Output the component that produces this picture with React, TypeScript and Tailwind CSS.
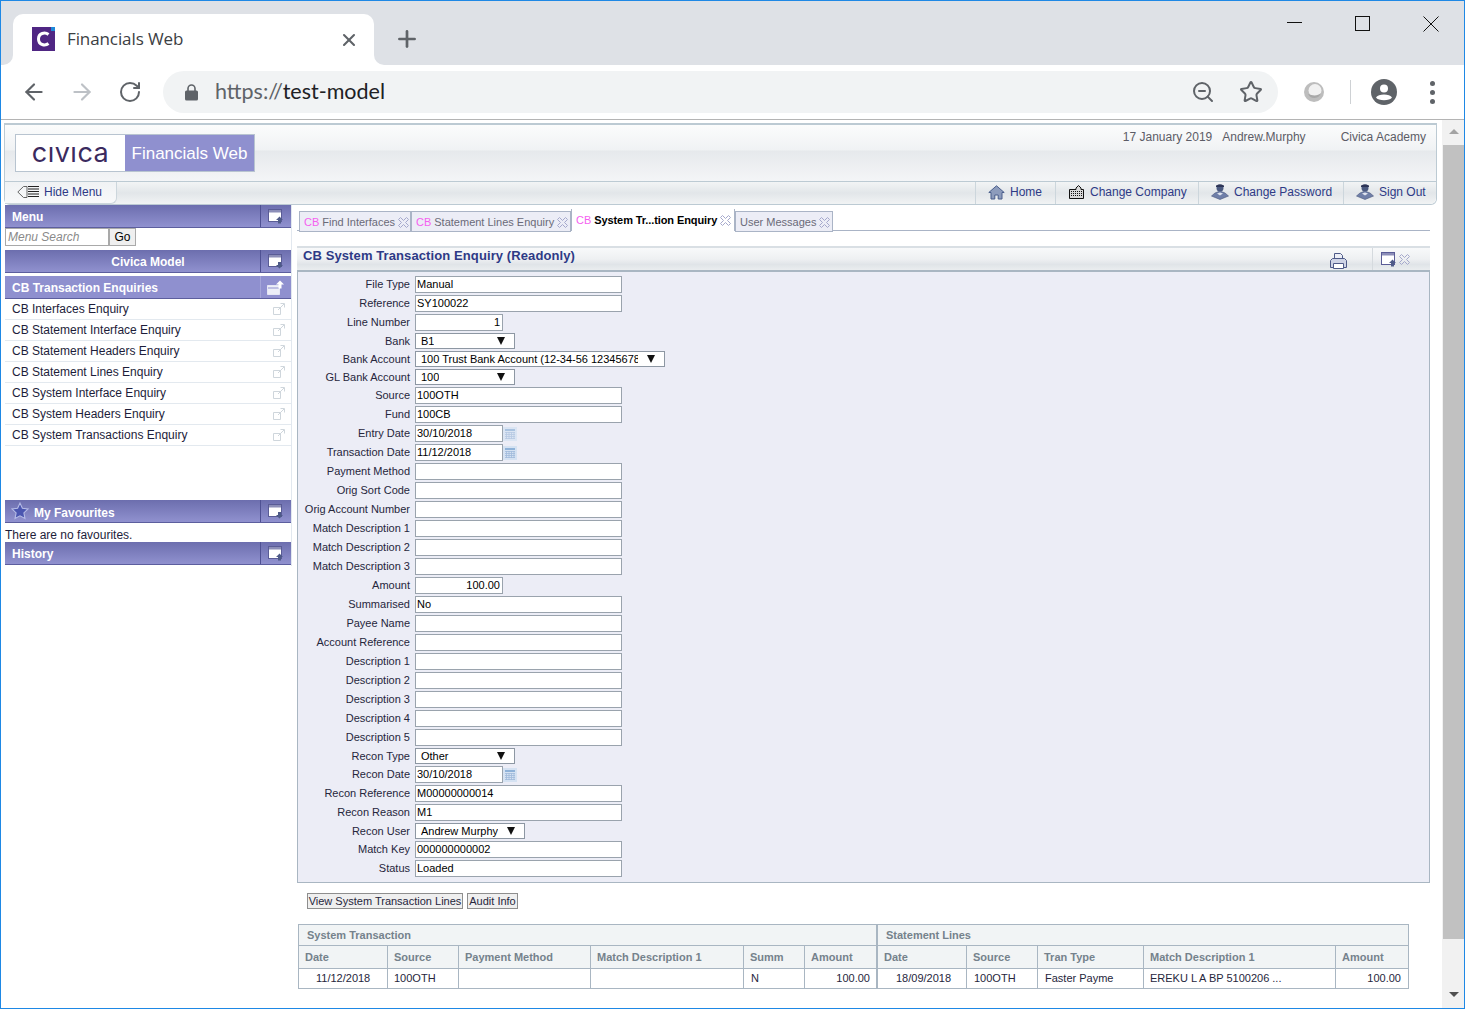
import { ArrowLeft, ArrowRight, RotateCw, ZoomOut, Star, Plus, X } from "lucide-react";

type Field = { label: string; value?: string; kind?: "select" | "date" | "num"; w?: number };

const fields: Field[] = [
  { label: "File Type", value: "Manual" },
  { label: "Reference", value: "SY100022" },
  { label: "Line Number", value: "1", kind: "num" },
  { label: "Bank", value: "B1", kind: "select", w: 100 },
  { label: "Bank Account", value: "100 Trust Bank Account (12-34-56 12345678", kind: "select", w: 250 },
  { label: "GL Bank Account", value: "100", kind: "select", w: 100 },
  { label: "Source", value: "100OTH" },
  { label: "Fund", value: "100CB" },
  { label: "Entry Date", value: "30/10/2018", kind: "date" },
  { label: "Transaction Date", value: "11/12/2018", kind: "date" },
  { label: "Payment Method" },
  { label: "Orig Sort Code" },
  { label: "Orig Account Number" },
  { label: "Match Description 1" },
  { label: "Match Description 2" },
  { label: "Match Description 3" },
  { label: "Amount", value: "100.00", kind: "num" },
  { label: "Summarised", value: "No" },
  { label: "Payee Name" },
  { label: "Account Reference" },
  { label: "Description 1" },
  { label: "Description 2" },
  { label: "Description 3" },
  { label: "Description 4" },
  { label: "Description 5" },
  { label: "Recon Type", value: "Other", kind: "select", w: 100 },
  { label: "Recon Date", value: "30/10/2018", kind: "date" },
  { label: "Recon Reference", value: "M00000000014" },
  { label: "Recon Reason", value: "M1" },
  { label: "Recon User", value: "Andrew Murphy", kind: "select", w: 110 },
  { label: "Match Key", value: "000000000002" },
  { label: "Status", value: "Loaded" },
];

const menuItems = [
  "CB Interfaces Enquiry",
  "CB Statement Interface Enquiry",
  "CB Statement Headers Enquiry",
  "CB Statement Lines Enquiry",
  "CB System Interface Enquiry",
  "CB System Headers Enquiry",
  "CB System Transactions Enquiry",
];

function WinIcon({ down }: { down?: boolean }) {
  return (
    <svg width="16" height="15" viewBox="0 0 16 15">
      <rect x="0.500" y="0.500" width="13" height="12" fill="#fff" stroke="#5a5c96" />
      <rect x="1" y="1" width="12" height="2.500" fill="#8c8eb8" />
      {down ? (
        <path d="M10 8h3v3h2l-3.500 3.500L8 11h2z" fill="#4e5a88" />
      ) : (
        <path d="M11.500 7.500L15 11h-2v3.500h-3V11H8z" fill="#4e5a88" />
      )}
    </svg>
  );
}

function TabClose() {
  return (
    <svg width="11" height="11" viewBox="0 0 11 11" fill="none" stroke="#a5a8cc" strokeWidth="1">
      <path d="M2.500 0.500L5.500 3.500L8.500 0.500L10.500 2.500L7.500 5.500L10.500 8.500L8.500 10.500L5.500 7.500L2.500 10.500L0.500 8.500L3.500 5.500L0.500 2.500Z" />
    </svg>
  );
}

function PersonIcon() {
  return (
    <svg width="18" height="16" viewBox="0 0 18 16">
      <circle cx="9" cy="4" r="3.500" fill="#4b5a80" />
      <path d="M5 3h8v-1.500C11 0 7 0 5 1.500z" fill="#2d3557" />
      <path d="M4 9l5-2 5 2 3.500 3-8.500 3.500L.5 12z" fill="#6f7fa8" stroke="#46557c" strokeWidth="0.600" />
      <path d="M6 9.500l3-1 3 1-3 2z" fill="#dfe4ee" />
    </svg>
  );
}

function HomeIcon() {
  return (
    <svg width="17" height="15" viewBox="0 0 17 15">
      <path d="M8.500 0.800L0.800 7.500H3V14h3.800v-4h3.400v4H14V7.500h2.200z" fill="#8d9cbc" stroke="#4b5f8c" strokeWidth="1" />
    </svg>
  );
}

function CompanyIcon() {
  return (
    <svg width="15" height="14" viewBox="0 0 15 14">
      <path d="M0.500 13.500V4.500H7V3l2.500-2.500L12 3v1.500h2.500v9z" fill="#d8d8d8" stroke="#111" />
      <path d="M2 6.500h11M2 8.500h11M2 10.500h11" stroke="#111" strokeDasharray="1 1" />
    </svg>
  );
}

function CalIcon({ dim }: { dim?: boolean }) {
  return (
    <svg width="14" height="14" viewBox="0 0 14 14" className={dim ? "opacity-70" : ""}>
      <rect width="14" height="14" fill="#d5e2f2" />
      <rect x="2" y="2" width="10" height="2" fill="#8fb2d8" />
      <path d="M2 5.500h10M2 7.500h10M2 9.500h10M2 11.500h10M3.500 5v7M6 5v7M8.500 5v7M11 5v7" stroke="#9fbadb" strokeWidth="0.800" />
    </svg>
  );
}

function Bar({ title, center, star, down, level2 }: { title: string; center?: boolean; star?: boolean; down?: boolean; level2?: boolean }) {
  return (
    <div className={`flex h-[23px] items-stretch border-b border-[#5c5e9e] text-xs font-bold text-white ${level2 ? "bg-[#8f90cf]" : "bg-[linear-gradient(#6c6eae,#9091cf)]"}`}>
      <div className={`flex min-w-0 flex-1 items-center pl-[7px] ${star ? "pt-[3px]" : "pt-[2px]"} ${center ? "justify-center pl-[31px]" : ""}`}>
        {star && (
          <svg width="18" height="18" viewBox="0 0 24 24" className="mr-[5px] -ml-[1px] -mt-[3px]">
            <path d="M12 1.500l3.200 6.900 7.500.9-5.500 5.200 1.400 7.500L12 18.400l-6.600 3.600 1.400-7.500L1.300 9.300l7.500-.9z" fill="#4b56b0" stroke="#b5bbe6" strokeWidth="1.500" />
          </svg>
        )}
        {title}
      </div>
      <div className={`flex w-[31px] items-center justify-center border-l ${level2 ? "border-[#a5a6da]" : "border-[#4f5193]"}`}>
        {level2 ? (
          <svg width="18" height="15" viewBox="0 0 18 15">
            <path d="M0.500 5.500h12v9h-12z" fill="#eceef7" stroke="#e4e6f4" />
            <path d="M1 8h11" stroke="#8f90cf" />
            <path d="M13 0.500l4 4h-2.500v4h-3v-4H9z" fill="#fff" />
          </svg>
        ) : (
          <WinIcon down={down} />
        )}
      </div>
    </div>
  );
}

function Sidebar() {
  return (
    <aside className="ml-[4px] flex h-[361px] w-[287px] flex-col border-r border-[#e2e8ef] text-xs text-[#1d1d3a]">
      <Bar title="Menu" />
      <div className="flex h-[22px] items-start">
        <div className="flex h-[18px] w-[104px] items-center border border-[#a9a9a9] pl-[2px] italic text-[#8a8a8a]">Menu Search</div>
        <div className="flex h-[18px] w-[27px] items-center justify-center border border-[#a9a9a9] bg-[#efefef] text-black">Go</div>
      </div>
      <Bar title="Civica Model" center down />
      <div className="h-[3px] shrink-0" />
      <Bar title="CB Transaction Enquiries" level2 />
      <div>
        {menuItems.map((item) => (
          <div key={item} className="flex h-[21px] items-center justify-between border-b border-[#e3e9ef] pl-[7px] pr-[6px]">
            <span>{item}</span>
            <svg width="12" height="12" viewBox="0 0 12 12" fill="none" stroke="#cfd6dc">
              <path d="M0.500 4.500h7v7h-7zM5 7l6-6M7.500 0.500h4v4" />
            </svg>
          </div>
        ))}
      </div>
      <div className="h-[54px] shrink-0" />
      <Bar title="My Favourites" star down />
      <div className="flex h-[19px] items-end text-xs leading-[14px]">There are no favourites.</div>
      <Bar title="History" />
    </aside>
  );
}

function Tab({ title, cb, active, w }: { title: string; cb?: boolean; active?: boolean; w: string }) {
  return (
    <div className={`flex items-center gap-[3px] border border-[#aab4c6] pl-1 ${w} ${active ? "-mt-px h-[22px] border-b-0 border-t-0 bg-white text-black font-medium" : "mt-px h-[21px] bg-[#ecedf6] pt-[2px] text-[#6a6a78]"}`}>
      {cb && <span className="text-[#f55ff0]">CB</span>}
      <span className={active ? "font-bold tracking-[-0.1px]" : ""}>{title}</span>
      <TabClose />
    </div>
  );
}

function FormRow({ f }: { f: Field }) {
  const isSelect = f.kind === "select";
  return (
    <div className={`flex items-center ${isSelect ? "h-[18px]" : "h-[19px]"}`}>
      <div className="w-[112px] shrink-0 text-right text-[#26263c]">{f.label}</div>
      <div className="ml-[5px] flex items-center">
        {isSelect ? (
          <div className="relative flex h-[16px] items-center overflow-hidden border border-[#8d97a3] bg-white pl-[5px] pr-[26px]" style={{ width: f.w }}>
            <span className="overflow-hidden whitespace-nowrap">{f.value}</span>
            <span className="absolute right-[9px] top-[3px] h-0 w-0 border-x-[4.500px] border-t-[8px] border-x-transparent border-t-[#111]" />
          </div>
        ) : f.kind === "date" ? (
          <>
            <div className="flex h-[17px] w-[88px] items-center border border-[#9aa3ad] bg-white pl-px">{f.value}</div>
            <CalIcon dim={f.label === "Entry Date"} />
          </>
        ) : f.kind === "num" ? (
          <div className="flex h-[17px] w-[88px] items-center justify-end border border-[#9aa3ad] bg-white pr-[2px]">{f.value}</div>
        ) : (
          <div className="flex h-[17px] w-[207px] items-center border border-[#9aa3ad] bg-white pl-px">{f.value}</div>
        )}
      </div>
    </div>
  );
}

function GridTable({ title, cols, heads, row, aligns }: { title: string; cols: string; heads: string[]; row: string[]; aligns: string[] }) {
  return (
    <div className="flex flex-col">
      <div className="flex h-[22px] items-center border border-[#a9b6c2] bg-[#f1f4f5] pl-2 font-bold text-[#75828c]">{title}</div>
      <div className={`grid border-x border-b border-[#a9b6c2] ${cols}`}>
        {heads.map((h, i) => (
          <div key={h + i} className={`flex h-[22px] items-center bg-[#f1f4f5] pl-[6px] font-bold text-[#75828c] ${i > 0 ? "border-l border-[#a9b6c2]" : ""}`}>{h}</div>
        ))}
        {row.map((c, i) => (
          <div key={i} className={`flex h-[20px] items-center overflow-hidden whitespace-nowrap border-t border-[#a9b6c2] ${aligns[i]} ${i > 0 ? "border-l" : ""} text-[#26263c]`}>{c}</div>
        ))}
      </div>
    </div>
  );
}

function MainPanel() {
  return (
    <main className="ml-[5px] w-[1133px] text-[11px]">
      {/* Tabs */}
      <div className="mt-[5px] flex h-[21px] items-start border-b border-[#aab4c6] pl-[2px]">
        <Tab title="Find Interfaces" cb w="w-[112px]" />
        <Tab title="Statement Lines Enquiry" cb w="w-[160px]" />
        <Tab title="System Tr...tion Enquiry" cb active w="w-[164px]" />
        <Tab title="User Messages" w="w-[98px]" />
      </div>

      {/* Title bar */}
      <div className="mt-[15px] flex h-[26px] items-start justify-between border-y-2 border-y-[#d9dfe4] border-b-[#a9b6c2] bg-[linear-gradient(#f8f9fa_0%,#eef0f2_50%,#e0e4e8_75%,#eaedef_100%)] pl-[6px]">
        <span className="text-[13px] font-bold leading-[15px] tracking-[0.1px] text-[#2e3a86]">CB System Transaction Enquiry (Readonly)</span>
        <div className="flex h-full items-center">
          <svg width="17" height="16" viewBox="0 0 17 16" fill="none" stroke="#4e5a88" className="mt-[3px] mr-[25px]">
            <path d="M4.500 5.500V.500h6l2 2v3" fill="#eceef6" />
            <path d="M.500 14.500v-7l2-2h12l2 2v7z" fill="#cfd4e6" />
            <path d="M3.500 10.500h10v5h-10z" fill="#fff" />
          </svg>
          <div className="flex h-full items-center gap-[2px] border-l border-[#d5dade] pl-[8px] pr-[20px]">
            <WinIcon />
            <TabClose />
          </div>
        </div>
      </div>

      {/* Form */}
      <div className="h-[611px] border border-t-0 border-[#a9b6c2] bg-[#ecedf6] pt-[3px]">
        {fields.map((f) => (
          <FormRow key={f.label} f={f} />
        ))}
      </div>

      {/* Buttons */}
      <div className="mt-[10px] ml-[10px] flex gap-1 text-[#26263c]">
        <div className="flex h-[16px] w-[156px] items-center justify-center border border-[#8e8e8e] bg-[#efefef]">View System Transaction Lines</div>
        <div className="flex h-[16px] w-[51px] items-center justify-center border border-[#8e8e8e] bg-[#efefef]">Audit Info</div>
      </div>

      {/* Result grids */}
      <div className="mt-[15px] ml-px flex">
        <div className="w-[579px]">
          <GridTable
            title="System Transaction"
            cols="grid-cols-[88px_71px_132px_153px_61px_72px]"
            heads={["Date", "Source", "Payment Method", "Match Description 1", "Summ", "Amount"]}
            row={["11/12/2018", "100OTH", "", "", "N", "100.00"]}
            aligns={["pl-[17px] border-[#a9b6c2]", "pl-[6px] border-[#a9b6c2]", "border-[#a9b6c2]", "border-[#a9b6c2]", "pl-[7px] border-[#a9b6c2]", "justify-end pr-[6px] border-[#a9b6c2]"]}
          />
        </div>
        <div className="w-[532px]">
          <GridTable
            title="Statement Lines"
            cols="grid-cols-[88px_71px_106px_192px_73px]"
            heads={["Date", "Source", "Tran Type", "Match Description 1", "Amount"]}
            row={["18/09/2018", "100OTH", "Faster Payme", "EREKU L A BP 5100206 ...", "100.00"]}
            aligns={["pl-[18px] border-[#a9b6c2]", "pl-[7px] border-[#a9b6c2]", "pl-[7px] border-[#a9b6c2]", "pl-[6px] border-[#a9b6c2]", "justify-end pr-[7px] border-[#a9b6c2]"]}
          />
        </div>
      </div>
    </main>
  );
}

function BrowserChrome() {
  return (
    <div className="shrink-0">
      <div className="flex h-[64px] bg-[#dee1e6]">
        <div className="relative ml-[12px] mt-[13px] flex h-[51px] w-[361px] items-center rounded-t-[10px] bg-white pl-[19px] pr-[15px]">
          <span className="absolute bottom-0 -left-[10px] h-[10px] w-[10px] bg-white">
            <span className="block h-full w-full rounded-br-[10px] bg-[#dee1e6]" />
          </span>
          <span className="absolute bottom-0 -right-[10px] h-[10px] w-[10px] bg-white">
            <span className="block h-full w-full rounded-bl-[10px] bg-[#dee1e6]" />
          </span>
          <svg width="23" height="24" viewBox="0 0 23 24" className="mb-0.5">
            <rect width="23" height="24" fill="#4f2683" />
            <rect x="19" width="4" height="4" fill="#1e88d8" />
            <path d="M16.500 7.500C13 4.800 6.500 6 6.500 12s6.500 7.200 10 4.500" fill="none" stroke="#fff" strokeWidth="3" />
          </svg>
          <span className="ml-[12px] mb-[2px] font-['Open_Sans',sans-serif] text-[17px] tracking-[-0.1px] text-[#3c4043]">Financials Web</span>
          <X size={20} strokeWidth={2.5} className="ml-auto text-[#5f6368]" />
        </div>
        <Plus size={26} strokeWidth={2.5} className="ml-[20px] mt-[25px] text-[#5f6368]" />
        <div className="ml-auto flex pr-[25px]">
          <div className="mt-[21px] h-px w-[15px] bg-[#111]" />
          <div className="ml-[53px] mt-[15px] h-[15px] w-[15px] border border-[#111]" />
          <svg width="16" height="16" viewBox="0 0 16 16" stroke="#111" className="ml-[53px] mt-[15px]">
            <path d="M.500.500l15 15M15.500.500l-15 15" />
          </svg>
        </div>
      </div>
      <div className="flex h-[55px] items-center border-b border-[#b4b4b4] bg-white">
        <ArrowLeft size={26} strokeWidth={2} className="ml-5 text-[#5f6368]" />
        <ArrowRight size={26} strokeWidth={2} className="ml-[22px] text-[#bdc1c6]" />
        <RotateCw size={24} strokeWidth={2} className="ml-[23px] text-[#5f6368]" />
        <div className="ml-[21px] flex h-[42px] w-[1115px] items-center rounded-full bg-[#f1f3f4] pl-[22px] pr-[15px]">
          <svg width="13" height="17" viewBox="0 0 13 17">
            <path d="M3 7V4.500a3.500 3.500 0 0 1 7 0V7" fill="none" stroke="#5f6368" strokeWidth="1.600" />
            <rect y="6.500" width="13" height="10" rx="1.500" fill="#5f6368" />
          </svg>
          <span className="ml-[17px] mb-[2px] font-['Lato',sans-serif] text-[21.500px] text-[#5f6368]">
            https://<span className="text-[#202124]">test-model</span>
          </span>
          <ZoomOut size={24} strokeWidth={2} className="ml-auto text-[#5f6368]" />
          <Star size={24} strokeWidth={2} className="ml-[24px] text-[#5f6368]" />
        </div>
        <svg width="22" height="22" viewBox="0 0 22 22" className="ml-[25px]">
          <circle cx="11" cy="11" r="10" fill="#bdbdbd" />
          <circle cx="12" cy="9.500" r="6.500" fill="#f1f1f1" />
          <path d="M5 13a7 7 0 0 0 13-1c-3 3-8 3-13 1z" fill="#a8a8a8" />
        </svg>
        <div className="ml-[25px] h-[24px] w-px bg-[#ced1d4]" />
        <svg width="26" height="26" viewBox="0 0 26 26" className="ml-[20px]">
          <circle cx="13" cy="13" r="13" fill="#5f6368" />
          <circle cx="13" cy="9.500" r="4" fill="#fff" />
          <path d="M5 18.500c2-4 14-4 16 0-2 3.500-14 3.500-16 0z" fill="#fff" />
        </svg>
        <div className="ml-[33px] flex flex-col gap-[4px]">
          <span className="h-[5px] w-[5px] rounded-full bg-[#5f6368]" />
          <span className="h-[5px] w-[5px] rounded-full bg-[#5f6368]" />
          <span className="h-[5px] w-[5px] rounded-full bg-[#5f6368]" />
        </div>
      </div>
    </div>
  );
}

function AppHeader() {
  return (
    <header className="ml-[3px] mt-[3px] w-[1433px] rounded-b-md border border-t-2 border-[#bccad3] text-xs">
      <div className="flex h-[56px] items-start justify-between bg-[linear-gradient(#fbfcfc_0%,#f0f2f4_45%,#e6e9ec_46%,#f4f5f7_100%)] pl-[10px] pr-[10px]">
        <div className="mt-[9px] flex h-[38px] border border-[#b8c4d0]">
          <div className="flex w-[109px] items-center justify-center bg-white pb-[2px] font-['Inter',sans-serif] text-[27px] leading-none tracking-[0.5px] text-[#3b2a5e]">cıvıca</div>
          <div className="flex w-[129px] items-center justify-center bg-[#8f90cf] pt-[2px] text-[17px] text-white">Financials Web</div>
        </div>
        <div className="mt-[4px] flex text-[#5c5c66]">
          <span className="ml-px">17 January 2019</span>
          <span className="ml-[10px]">Andrew.Murphy</span>
          <span className="ml-[35px]">Civica Academy</span>
        </div>
      </div>
      <div className="flex h-[23px] items-stretch rounded-b-md border-t border-[#bccad3] bg-[linear-gradient(#f2f4f5_0%,#e2e6e9_50%,#f1f3f4_100%)] pb-[2px] text-[#2e3a86]">
        <div className="-mb-[2px] flex w-[112px] items-center rounded-br-md border-r border-b border-[#ccd6dc] bg-[linear-gradient(#f0f2f4,#f8f9fa)] pb-[2px] pl-[12px]">
          <svg width="23" height="14" viewBox="0 0 23 14" fill="none" stroke="#666" className="mr-[4px]">
            <path d="M10 1.500H6.500L.8 7l5.700 5.500H10z" />
            <path d="M11 1.500h11M11 4h11M11 6.500h11M11 9h11M11 11.500h11" stroke="#222" />
          </svg>
          Hide Menu
        </div>
        <div className="ml-auto -mb-[2px] flex">
          <div className="flex w-[80px] items-center gap-[5px] border-l border-[#ccd6dc] pb-[2px] pl-[12px]"><HomeIcon />Home</div>
          <div className="flex w-[143px] items-center gap-[6px] border-l border-[#ccd6dc] pb-[2px] pl-[13px]"><CompanyIcon />Change Company</div>
          <div className="flex w-[145px] items-center gap-[5px] border-l border-[#ccd6dc] pb-[2px] pl-[12px]"><PersonIcon />Change Password</div>
          <div className="flex w-[93px] items-center gap-[5px] border-l border-[#ccd6dc] pb-[2px] pl-[12px]"><PersonIcon />Sign Out</div>
        </div>
      </div>
    </header>
  );
}

function Scrollbar() {
  return (
    <div className="flex w-[22px] shrink-0 flex-col items-center bg-[#f1f1f1] pl-px">
      <div className="mt-[9px] h-0 w-0 border-x-[5px] border-b-[5px] border-x-transparent border-b-[#a3a3a3]" />
      <div className="mt-[11px] h-[794px] w-full bg-[#c1c1c1]" />
      <div className="mt-[53px] h-0 w-0 border-x-[5px] border-t-[5px] border-x-transparent border-t-[#505050]" />
    </div>
  );
}

export default function App() {
  return (
    <div className="flex h-[1009px] w-[1465px] flex-col overflow-hidden border border-[#1e88e5] bg-white font-['Liberation_Sans',Arial,sans-serif]">
      <BrowserChrome />
      <div className="flex min-h-0 flex-1">
        <div className="min-w-0 flex-1">
          <AppHeader />
          <div className="flex">
            <Sidebar />
            <MainPanel />
          </div>
        </div>
        <Scrollbar />
      </div>
    </div>
  );
}
